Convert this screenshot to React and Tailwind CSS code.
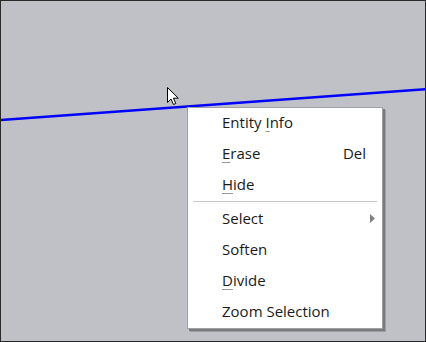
import React from 'react'

const ITEMS = [
  { label: 'Entity Info', keyIndex: 7 },
  { label: 'Erase', keyIndex: 0, shortcut: 'Del' },
  { label: 'Hide', keyIndex: 0 },
  { separator: true },
  { label: 'Select', keyIndex: -1, submenu: true },
  { label: 'Soften', keyIndex: -1 },
  { label: 'Divide', keyIndex: 0 },
  { label: 'Zoom Selection', keyIndex: -1 },
]

function Label({ text, index }) {
  if (index < 0) return <span>{text}</span>
  return (
    <span>
      {text.slice(0, index)}
      <span className="underline decoration-[#9a9a9a] underline-offset-[3px]">{text[index]}</span>
      {text.slice(index + 1)}
    </span>
  )
}

function Cursor() {
  return (
    <svg className="absolute left-[166px] top-[86px]" width="13" height="19" viewBox="0 0 13 19">
      <path d="M0.5 0.5 L0.5 15.5 L4 12 L6.5 17.5 L8.8 16.5 L6.4 11.2 L11.3 11.2 Z" fill="#fff" stroke="#000" strokeWidth="1" />
    </svg>
  )
}

export default function App() {
  return (
    <div className="relative w-[426px] h-[342px] overflow-hidden bg-[#c0c1c6] border border-[#2a2a2a]" style={{ fontFamily: '"Open Sans", "Noto Sans", sans-serif' }}>
      <svg className="absolute inset-0" width="426" height="342">
        <line x1="-1" y1="119" x2="426" y2="88" stroke="#0000ff" strokeWidth="2.5" />
      </svg>
      <Cursor />

      {/* context menu */}
      <div className="absolute left-[186px] top-[106px] w-[196px] bg-white border border-[#a0a0a0] shadow-[2px_2px_0_#7a7a7e,3px_3px_0_#9c9da2] text-[15px] text-[#1a1a1a]">
        {ITEMS.map((item, i) =>
          item.separator ? (
            <div key={i} className="h-[3px] flex items-start px-[5px]">
              <div className="h-px w-full bg-[#c8c8c8]" />
            </div>
          ) : (
            <div key={i} className="h-[31px] flex items-center pl-[34px] pr-[16px] pb-[3px] relative">
              <div className="flex-1">
                <Label text={item.label} index={item.keyIndex} />
              </div>
              {item.shortcut ? <span>{item.shortcut}</span> : null}
              {item.submenu ? (
                <svg className="absolute right-[7px] top-[10px]" width="5" height="9" viewBox="0 0 5 9">
                  <path d="M0 0 L5 4.5 L0 9 Z" fill="#808080" />
                </svg>
              ) : null}
            </div>
          )
        )}
      </div>
    </div>
  )
}
